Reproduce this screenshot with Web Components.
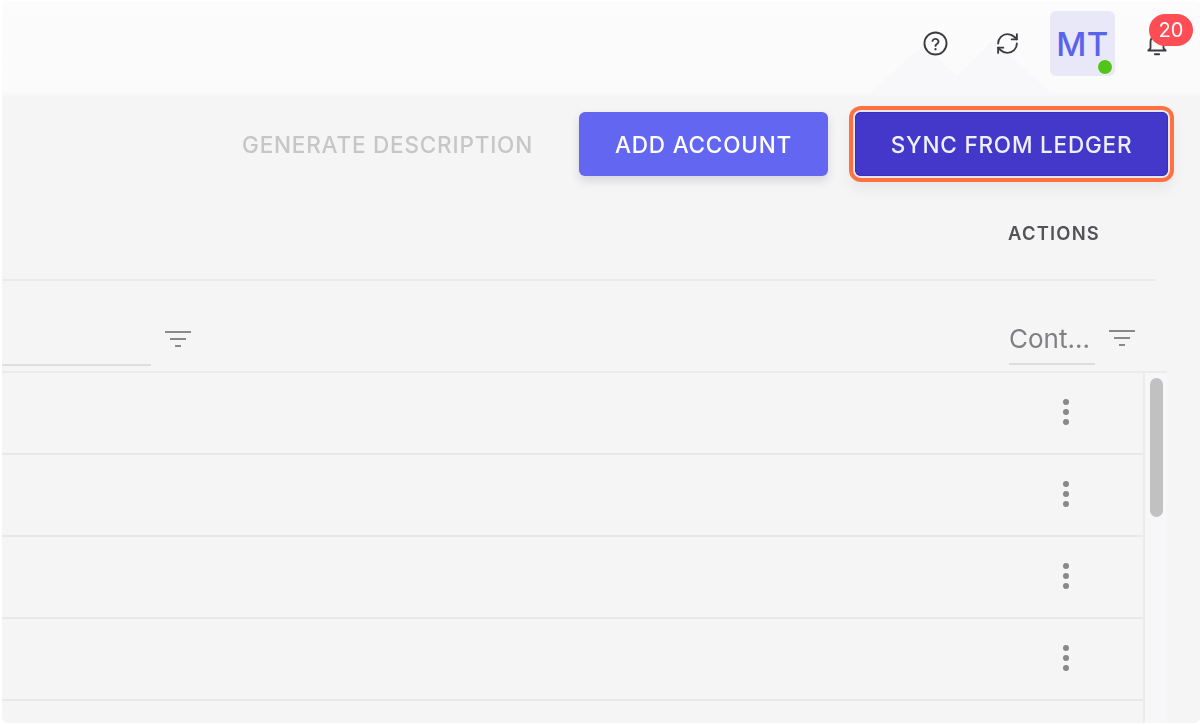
<!DOCTYPE html>
<html>
<head>
<meta charset="utf-8">
<style>
  html, body { margin: 0; padding: 0; height: 100%; background: #fff; overflow: hidden; }
  body { font-family: Inter, "Liberation Sans", sans-serif; }
</style>
</head>
<body>
<app-shell>
  <top-bar slot="top">
    <icon-button name="help"></icon-button>
    <icon-button name="sync"></icon-button>
    <user-avatar initials="MT"></user-avatar>
    <notify-bell count="20"></notify-bell>
  </top-bar>
  <action-bar slot="actions">
    <action-button kind="text">GENERATE DESCRIPTION</action-button>
    <action-button kind="primary">ADD ACCOUNT</action-button>
    <action-button kind="dark">SYNC FROM LEDGER</action-button>
  </action-bar>
  <accounts-table slot="table" rows="5"></accounts-table>
</app-shell>

<script>
const ICONS = {
    help: `<circle cx="12" cy="12" r="10.6"/><path d="M9.1 9.5a3 3 0 0 1 5.8.8c0 2-2.9 2.4-2.9 4"/><path d="M12 17.4v.1" stroke-width="2.2"/>`,
    sync: `<path d="M3 12a9 9 0 0 1 9-9 9.75 9.75 0 0 1 6.74 2.74L21 8"/><path d="M21 3v5h-5"/><path d="M21 12a9 9 0 0 1-9 9 9.75 9.75 0 0 1-6.74-2.74L3 16"/><path d="M8 16H3v5"/>`
};

class AppShell extends HTMLElement {
    constructor() {
        super();
        this.attachShadow({ mode: "open" });
        this.shadowRoot.innerHTML = `
            <style>
                :host { display: block; width: 1200px; height: 725px; overflow: hidden; background: #fff; }
                .frame {
                    box-sizing: border-box;
                    height: 722px;
                    margin: 1px 0 0 2px;
                    display: flex;
                    flex-direction: column;
                    border-radius: 6px;
                    overflow: hidden;
                    background: #f5f5f5;
                    filter: blur(.35px);
                }
                .top { flex: none; }
                .body { flex: 1; min-height: 0; display: flex; flex-direction: column; }
            </style>
            <div class="frame">
                <div class="top"><slot name="top"></slot></div>
                <div class="body">
                    <slot name="actions"></slot>
                    <slot name="table"></slot>
                </div>
            </div>
        `;
    }
}

class TopBar extends HTMLElement {
    constructor() {
        super();
        this.attachShadow({ mode: "open" });
        this.shadowRoot.innerHTML = `
            <style>
                :host {
                    position: relative;
                    display: flex;
                    align-items: flex-start;
                    justify-content: flex-end;
                    height: 96px;
                    box-sizing: border-box;
                    padding: 10px 30px 0 0;
                    background: linear-gradient(180deg, #fcfcfc 0, #fbfbfb 90px, #f6f6f6 96px);
                }
                .glow { position: absolute; left: 868px; top: 36px; width: 190px; height: 60px; }
                ::slotted(*) { z-index: 1; }
            </style>
            <svg class="glow" viewBox="0 0 190 60"><path d="M2 54 54 7 87 39 123 3 179 54q2 4-3 4H6q-5 0-4-4z" fill="#f8f8fa"/></svg>
            <slot></slot>
        `;
    }
}

class IconButton extends HTMLElement {
    constructor() {
        super();
        this.attachShadow({ mode: "open" });
        const name = this.getAttribute("name");
        this.shadowRoot.innerHTML = `
            <style>
                :host { display: flex; align-items: center; justify-content: center; width: 26px; height: 65px; margin-right: 46px; }
                :host([name="sync"]) { margin-right: 30px; }
                svg { width: 25px; height: 25px; fill: none; stroke: #3c3c40; stroke-width: 1.8; stroke-linecap: round; stroke-linejoin: round; }
            </style>
            <svg viewBox="0 0 24 24">${ICONS[name]}</svg>
        `;
    }
}

class UserAvatar extends HTMLElement {
    constructor() {
        super();
        this.attachShadow({ mode: "open" });
        this.shadowRoot.innerHTML = `
            <style>
                :host {
                    position: relative;
                    display: flex;
                    align-items: center;
                    justify-content: center;
                    width: 65px;
                    height: 65px;
                    border-radius: 6px;
                    background: #e8e8f8;
                    color: #5a63ec;
                    font-size: 33px;
                    font-weight: 500;
                    letter-spacing: .4px;
                }
                .dot {
                    position: absolute;
                    right: 2px;
                    bottom: 1px;
                    width: 14px;
                    height: 14px;
                    border-radius: 50%;
                    background: #52c41a;
                    border: 1px solid #f4f4fb;
                }
            </style>
            ${this.getAttribute("initials")}
            <span class="dot"></span>
        `;
    }
}

class NotifyBell extends HTMLElement {
    constructor() {
        super();
        this.attachShadow({ mode: "open" });
        this.shadowRoot.innerHTML = `
            <style>
                :host { position: relative; display: block; width: 26px; height: 65px; margin-left: 29px; }
                svg { position: absolute; left: 0; top: 20px; width: 26px; height: 26px; fill: none; stroke: #3c3c40; stroke-width: 1.7; stroke-linecap: round; stroke-linejoin: round; }
                .badge {
                    position: absolute;
                    left: 5px;
                    top: 3px;
                    width: 44px;
                    height: 32px;
                    border-radius: 16px;
                    background: #ff4d55;
                    color: #fff;
                    font-size: 20px;
                    line-height: 32px;
                    text-align: center;
                }
            </style>
            <svg viewBox="0 0 24 24"><path d="M6 16V10a6 6 0 0 1 12 0v6l2 2H4z"/><path d="M10 21.5h4"/></svg>
            <span class="badge">${this.getAttribute("count")}</span>
        `;
    }
}

class ActionBar extends HTMLElement {
    constructor() {
        super();
        this.attachShadow({ mode: "open" });
        this.shadowRoot.innerHTML = `
            <style>
                :host {
                    display: flex;
                    justify-content: flex-end;
                    align-items: center;
                    height: 64px;
                    margin-top: 15px;
                    padding-right: 32px;
                    gap: 27px;
                }
            </style>
            <slot></slot>
        `;
    }
}

class ActionButton extends HTMLElement {
    constructor() {
        super();
        this.attachShadow({ mode: "open" });
        this.shadowRoot.innerHTML = `
            <style>
                :host {
                    display: flex;
                    align-items: center;
                    justify-content: center;
                    box-sizing: border-box;
                    height: 64px;
                    border-radius: 6px;
                    font-size: 22.5px;
                    font-weight: 500;
                    letter-spacing: .8px;
                    white-space: nowrap;
                }
                :host([kind="text"]) { color: #c6c6c6; width: 289px; margin-right: 20px; }
                :host([kind="primary"]) {
                    width: 249px;
                    background: #6366f1;
                    color: #fff;
                    box-shadow: 0 5px 10px rgba(60,60,90,.16);
                }
                :host([kind="dark"]) {
                    width: 313px;
                    background: #4338ca;
                    color: #eef0fb;
                    box-shadow: inset 0 0 0 1px #3a2ec4, 0 0 0 2px #e6e6ee, 0 0 0 6px #ff7043, 0 8px 14px 6px rgba(0,0,0,.05);
                }
            </style>
            <slot></slot>
        `;
    }
}

class FilterIcon extends HTMLElement {
    constructor() {
        super();
        this.attachShadow({ mode: "open" });
        this.shadowRoot.innerHTML = `
            <style>
                :host { display: block; width: 26px; height: 20px; flex: none; }
                svg { display: block; width: 26px; height: 20px; stroke: #8a8a8c; stroke-width: 2.2; }
            </style>
            <svg viewBox="0 0 26 20"><path d="M0 2h26M5 9h16M10 16h6"/></svg>
        `;
    }
}

class RowMenu extends HTMLElement {
    constructor() {
        super();
        this.attachShadow({ mode: "open" });
        this.shadowRoot.innerHTML = `
            <style>
                :host { display: flex; flex-direction: column; gap: 4px; width: 6px; }
                i { display: block; width: 6px; height: 6px; border-radius: 50%; background: #88888c; }
            </style>
            <i></i><i></i><i></i>
        `;
    }
}

class AccountsTable extends HTMLElement {
    constructor() {
        super();
        this.attachShadow({ mode: "open" });
        let rows = "";
        for (let i = 0; i < Number(this.getAttribute("rows")); i++) {
            rows += `<div class="row"><row-menu></row-menu></div>`;
        }
        this.shadowRoot.innerHTML = `
            <style>
                :host { display: block; flex: 1; min-height: 0; }
                .head {
                    display: flex;
                    justify-content: flex-end;
                    box-sizing: border-box;
                    height: 105px;
                    margin-right: 44px;
                    padding: 45px 56px 0 0;
                    border-bottom: 2px solid #ebebeb;
                    color: #525258;
                    font-size: 18.4px;
                    font-weight: 600;
                    line-height: 24px;
                    letter-spacing: 1.2px;
                }
                .filters {
                    display: flex;
                    justify-content: space-between;
                    align-items: flex-start;
                    box-sizing: border-box;
                    height: 92px;
                    margin-right: 33px;
                    padding-top: 35px;
                    border-bottom: 2px solid #ebebeb;
                }
                .name-filter { display: flex; align-items: flex-start; gap: 14px; padding-top: 12px; }
                .name-filter .line { width: 149px; height: 48px; border-bottom: 2px solid #dedede; margin-top: -12px; }
                .name-filter filter-icon { margin-top: 2px; }
                .cont-filter { display: flex; align-items: flex-start; gap: 14px; padding-right: 32px; }
                .cont {
                    box-sizing: border-box;
                    width: 86px;
                    height: 49px;
                    padding-top: 10px;
                    border-bottom: 2px solid #dedede;
                    color: #808084;
                    font-size: 26px;
                    line-height: 26px;
                    white-space: nowrap;
                }
                .cont-filter filter-icon { margin-top: 13px; }
                .body { display: flex; margin-right: 33px; }
                .rows { flex: 1; min-width: 0; }
                .row {
                    display: flex;
                    align-items: center;
                    justify-content: flex-end;
                    box-sizing: border-box;
                    height: 82px;
                    padding: 0 74px 2px 0;
                    border-bottom: 2px solid #e8e8e8;
                }
                .track {
                    flex: none;
                    box-sizing: border-box;
                    width: 24px;
                    background: #f7f7f9;
                    border-left: 2px solid #ebebeb;
                    padding: 5px 3px 0 5px;
                    height: 360px;
                }
                .thumb { width: 13px; height: 139px; border-radius: 7px; background: #c1c1c1; }
            </style>
            <div class="head">ACTIONS</div>
            <div class="filters">
                <div class="name-filter"><div class="line"></div><filter-icon></filter-icon></div>
                <div class="cont-filter"><div class="cont">Cont...</div><filter-icon></filter-icon></div>
            </div>
            <div class="body">
                <div class="rows">${rows}</div>
                <div class="track"><div class="thumb"></div></div>
            </div>
        `;
    }
}

customElements.define("app-shell", AppShell);
customElements.define("top-bar", TopBar);
customElements.define("icon-button", IconButton);
customElements.define("user-avatar", UserAvatar);
customElements.define("notify-bell", NotifyBell);
customElements.define("action-bar", ActionBar);
customElements.define("action-button", ActionButton);
customElements.define("filter-icon", FilterIcon);
customElements.define("row-menu", RowMenu);
customElements.define("accounts-table", AccountsTable);
</script>
</body>
</html>
